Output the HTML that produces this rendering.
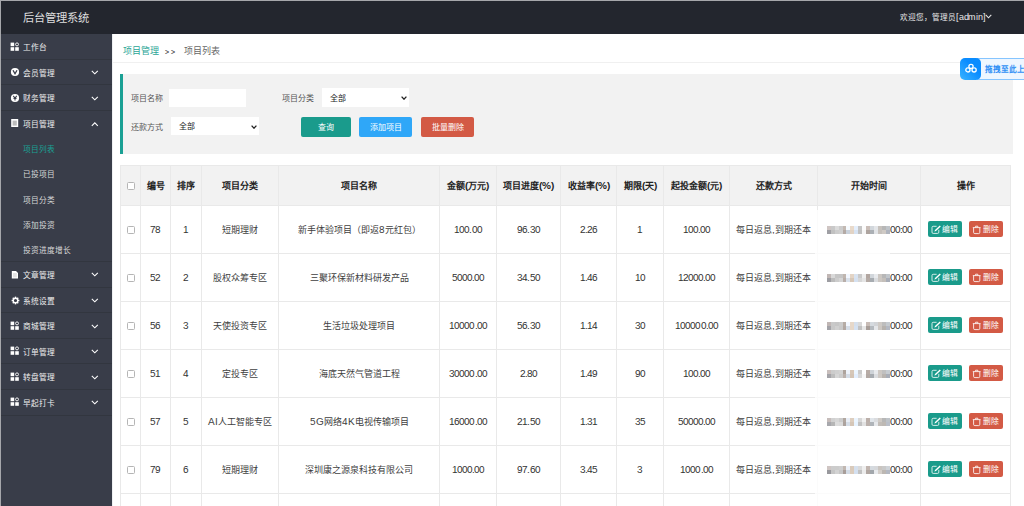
<!DOCTYPE html><html lang="zh-CN"><head><meta charset="utf-8"><style>
@font-face{font-family:"LSA";src:local("Liberation Sans"),local("LiberationSans");font-weight:400;size-adjust:111%;unicode-range:U+0020-00FF}
@font-face{font-family:"LSA";src:local("Liberation Sans Bold"),local("LiberationSans-Bold");font-weight:700;size-adjust:111%;unicode-range:U+0020-00FF}
*{box-sizing:border-box;margin:0;padding:0}
html,body{width:1024px;height:506px;overflow:hidden;background:#fff;font-family:"LSA","Liberation Sans",sans-serif;}
#frame-t{position:absolute;left:0;top:0;width:1024px;height:1px;background:#a6a7ab;z-index:50}
#frame-l{position:absolute;left:0;top:0;width:1px;height:506px;background:#a6a7ab;z-index:50}
#hdr{position:absolute;left:0;top:0;width:1024px;height:34px;background:#23262e}
#hdr .logo{position:absolute;left:23px;top:10px;font-size:11.3px;line-height:16px;color:#dedede;white-space:nowrap}
#hdr .user{position:absolute;left:900px;top:11.2px;font-size:7.6px;line-height:12px;color:#e8e8e8;white-space:nowrap}
#side{position:absolute;left:0;top:34px;width:112px;height:472px;background:#393d49}
.mi{position:absolute;left:0;top:0;width:112px}
.mi .t{position:absolute;left:23px;font-size:7.7px;line-height:11px;color:#eee;white-space:nowrap}
.ic{position:absolute;left:10px}
.ch{position:absolute;left:91px}
.si .t{position:absolute;left:23px;font-size:7.7px;line-height:11px;color:#d8d8d8;white-space:nowrap}
#crumb{position:absolute;left:112px;top:34px;width:912px;height:29px;border-bottom:1px solid #f0f0f0}
#crumb span{position:absolute;top:10.2px;font-size:9px;line-height:13px;white-space:nowrap}
#search{position:absolute;left:120px;top:74px;width:893px;height:80px;background:#f2f2f2;border-left:3px solid #1aa094}
.lbl{position:absolute;font-size:8px;line-height:11px;color:#555;white-space:nowrap}
.inp{position:absolute;background:#fff}
.sel{position:absolute;background:#fff}
.sel span{position:absolute;left:8px;top:4px;font-size:8px;line-height:11px;color:#222}
.sel svg{position:absolute;right:2px;top:7.5px}
.btn{position:absolute;height:20px;border-radius:2px;color:#fff;font-size:8px;line-height:20px;text-align:center;white-space:nowrap}
#tbl{position:absolute;left:120px;top:165px;border-collapse:collapse;table-layout:fixed;width:891px}
.n{color:#333;letter-spacing:-0.9px;position:relative;top:0px}
#tbl td,#tbl th{border:1px solid #e9e9e9;text-align:center;font-size:9px;color:#404040;white-space:nowrap;overflow:hidden;padding:0}
#tbl th{background:#f2f2f2;height:40px;font-weight:bold;color:#222}
#tbl td{height:48px}
.cb{display:inline-block;width:8px;height:8px;border:1px solid #b5b5b5;background:#fff;border-radius:1.5px;vertical-align:middle;position:relative;top:-0.8px}
.ob{display:inline-block;position:relative;height:16px;border-radius:2px;width:33.6px;vertical-align:middle;top:-0.5px}
.obt{position:absolute;left:13.8px;top:2.6px;font-size:7.8px;line-height:11px;color:#fff}
#bd{position:absolute;left:960px;top:58px;width:80px;height:22px;z-index:20}
#bd .sq{position:absolute;left:0;top:0;width:21px;height:22px;border-radius:5px;background:linear-gradient(to top right,#3ab4ff,#0a8cff 60%);z-index:2}
#bd .sq svg{position:absolute;left:3.5px;top:5.4px}
#bd .tx{position:absolute;left:17px;top:0;width:70px;height:22px;background:#eef6ff;border:1px solid #86c5ff;border-left:none;padding-left:7.5px;font-size:7.6px;line-height:20px;color:#2f8ff5;font-weight:bold;white-space:nowrap}
.mos{display:inline-block;position:relative;z-index:2;width:63px;height:7.8px;vertical-align:middle;top:-0.3px}
.mos i{position:absolute;width:3.95px;height:3.9px}
#tbl td.dt{padding-left:1px}
</style></head><body>
<div id="hdr"><div class="logo">后台管理系统</div><div class="user">欢迎您，管理员<span style="font-size:7.8px;letter-spacing:-0.25px">[admin]</span><svg width="7" height="5" viewBox="0 0 7 5" style="margin-left:-0.5px;vertical-align:1px"><path d="M0.7 0.8 L3.5 3.8 L6.3 0.8" stroke="#e8e8e8" stroke-width="1.1" fill="none"/></svg></div></div>
<div id="side">
<div style="position:absolute;left:0;top:25px;width:112px;height:1px;background:#32363f"></div>
<div style="position:absolute;left:0;top:50px;width:112px;height:1px;background:#32363f"></div>
<div style="position:absolute;left:0;top:76px;width:112px;height:1px;background:#32363f"></div>
<div style="position:absolute;left:0;top:227px;width:112px;height:1px;background:#32363f"></div>
<div style="position:absolute;left:0;top:253px;width:112px;height:1px;background:#32363f"></div>
<div style="position:absolute;left:0;top:278px;width:112px;height:1px;background:#32363f"></div>
<div style="position:absolute;left:0;top:304px;width:112px;height:1px;background:#32363f"></div>
<div style="position:absolute;left:0;top:329px;width:112px;height:1px;background:#32363f"></div>
<div style="position:absolute;left:0;top:355px;width:112px;height:1px;background:#32363f"></div>
<div style="position:absolute;left:0;top:381px;width:112px;height:1px;background:#32363f"></div>
<div class="mi"><div class="t" style="top:8.40px">工作台</div><svg class="ic" style="top:7.699999999999999px" width="10" height="10" viewBox="0 0 10 10"><rect x="0.6" y="0.6" width="3.6" height="3.6" fill="#fff"/><rect x="0.6" y="5.2" width="3.6" height="3.6" fill="#fff"/><rect x="5.2" y="5.2" width="3.6" height="3.6" fill="#fff"/><circle cx="7" cy="2.4" r="1.5" stroke="#fff" stroke-width="0.9" fill="none"/></svg></div>
<div class="mi"><div class="t" style="top:33.90px">会员管理</div><svg class="ic" style="top:33.2px" width="10" height="10" viewBox="0 0 10 10"><circle cx="5" cy="5" r="4.1" fill="#fff"/><path d="M3 3.3 L5 6.8 L7 3.3" stroke="#393d49" stroke-width="1.3" fill="none"/></svg><svg class="ch" style="top:36.2px" width="8" height="5" viewBox="0 0 8 5"><path d="M0.8 0.8 L3.8 3.8 L6.8 0.8" stroke="#fff" stroke-width="1.1" fill="none"/></svg></div>
<div class="mi"><div class="t" style="top:59.40px">财务管理</div><svg class="ic" style="top:58.7px" width="10" height="10" viewBox="0 0 10 10"><circle cx="5" cy="5" r="4.1" fill="#fff"/><path d="M3.2 2.8 L5 5 L6.8 2.8 M5 5 V7.4 M3.5 5.4 H6.5" stroke="#393d49" stroke-width="1.1" fill="none"/></svg><svg class="ch" style="top:61.7px" width="8" height="5" viewBox="0 0 8 5"><path d="M0.8 0.8 L3.8 3.8 L6.8 0.8" stroke="#fff" stroke-width="1.1" fill="none"/></svg></div>
<div class="mi"><div class="t" style="top:84.90px">项目管理</div><svg class="ic" style="top:84.2px" width="10" height="10" viewBox="0 0 10 10"><rect x="1.2" y="1" width="7" height="8" fill="#fff"/><rect x="2.6" y="2.6" width="4.2" height="5" fill="#bbb"/></svg><svg class="ch" style="top:88.2px" width="8" height="5" viewBox="0 0 8 5"><path d="M0.8 3.8 L3.8 0.8 L6.8 3.8" stroke="#fff" stroke-width="1.1" fill="none"/></svg></div>
<div class="si"><div class="t" style="top:110.40px;color:#1aa094">项目列表</div></div>
<div class="si"><div class="t" style="top:135.45px;color:#d8d8d8">已投项目</div></div>
<div class="si"><div class="t" style="top:160.50px;color:#d8d8d8">项目分类</div></div>
<div class="si"><div class="t" style="top:185.55px;color:#d8d8d8">添加投资</div></div>
<div class="si"><div class="t" style="top:210.60px;color:#d8d8d8">投资进度增长</div></div>
<div class="mi"><div class="t" style="top:235.90px">文章管理</div><svg class="ic" style="top:236.2px" width="10" height="10" viewBox="0 0 10 10"><path d="M1.8 1 H6 L8 3 V8.6 H1.8 Z" fill="#fff"/><rect x="3" y="3" width="3.8" height="4.4" fill="#e4e4e4"/></svg><svg class="ch" style="top:238.2px" width="8" height="5" viewBox="0 0 8 5"><path d="M0.8 0.8 L3.8 3.8 L6.8 0.8" stroke="#fff" stroke-width="1.1" fill="none"/></svg></div>
<div class="mi"><div class="t" style="top:261.90px">系统设置</div><svg class="ic" style="top:261.7px;left:10.5px" width="9" height="9" viewBox="0 0 10 10"><g fill="#fff"><rect x="4.2" y="0.7" width="1.6" height="2" transform="rotate(0 5 5)"/><rect x="4.2" y="0.7" width="1.6" height="2" transform="rotate(45 5 5)"/><rect x="4.2" y="0.7" width="1.6" height="2" transform="rotate(90 5 5)"/><rect x="4.2" y="0.7" width="1.6" height="2" transform="rotate(135 5 5)"/><rect x="4.2" y="0.7" width="1.6" height="2" transform="rotate(180 5 5)"/><rect x="4.2" y="0.7" width="1.6" height="2" transform="rotate(225 5 5)"/><rect x="4.2" y="0.7" width="1.6" height="2" transform="rotate(270 5 5)"/><rect x="4.2" y="0.7" width="1.6" height="2" transform="rotate(315 5 5)"/></g><circle cx="5" cy="5" r="2.55" stroke="#fff" stroke-width="1.5" fill="none"/></svg><svg class="ch" style="top:264.2px" width="8" height="5" viewBox="0 0 8 5"><path d="M0.8 0.8 L3.8 3.8 L6.8 0.8" stroke="#fff" stroke-width="1.1" fill="none"/></svg></div>
<div class="mi"><div class="t" style="top:287.40px">商城管理</div><svg class="ic" style="top:286.7px" width="10" height="10" viewBox="0 0 10 10"><rect x="0.6" y="0.6" width="3.6" height="3.6" fill="#fff"/><rect x="0.6" y="5.2" width="3.6" height="3.6" fill="#fff"/><rect x="5.2" y="5.2" width="3.6" height="3.6" fill="#fff"/><circle cx="7" cy="2.4" r="1.5" stroke="#fff" stroke-width="0.9" fill="none"/></svg><svg class="ch" style="top:289.7px" width="8" height="5" viewBox="0 0 8 5"><path d="M0.8 0.8 L3.8 3.8 L6.8 0.8" stroke="#fff" stroke-width="1.1" fill="none"/></svg></div>
<div class="mi"><div class="t" style="top:312.90px">订单管理</div><svg class="ic" style="top:312.2px" width="10" height="10" viewBox="0 0 10 10"><rect x="0.6" y="0.6" width="3.6" height="3.6" fill="#fff"/><rect x="0.6" y="5.2" width="3.6" height="3.6" fill="#fff"/><rect x="5.2" y="5.2" width="3.6" height="3.6" fill="#fff"/><circle cx="7" cy="2.4" r="1.5" stroke="#fff" stroke-width="0.9" fill="none"/></svg><svg class="ch" style="top:315.2px" width="8" height="5" viewBox="0 0 8 5"><path d="M0.8 0.8 L3.8 3.8 L6.8 0.8" stroke="#fff" stroke-width="1.1" fill="none"/></svg></div>
<div class="mi"><div class="t" style="top:338.40px">转盘管理</div><svg class="ic" style="top:337.7px" width="10" height="10" viewBox="0 0 10 10"><rect x="0.6" y="0.6" width="3.6" height="3.6" fill="#fff"/><rect x="0.6" y="5.2" width="3.6" height="3.6" fill="#fff"/><rect x="5.2" y="5.2" width="3.6" height="3.6" fill="#fff"/><circle cx="7" cy="2.4" r="1.5" stroke="#fff" stroke-width="0.9" fill="none"/></svg><svg class="ch" style="top:340.7px" width="8" height="5" viewBox="0 0 8 5"><path d="M0.8 0.8 L3.8 3.8 L6.8 0.8" stroke="#fff" stroke-width="1.1" fill="none"/></svg></div>
<div class="mi"><div class="t" style="top:363.90px">早起打卡</div><svg class="ic" style="top:363.2px" width="10" height="10" viewBox="0 0 10 10"><rect x="0.6" y="0.6" width="3.6" height="3.6" fill="#fff"/><rect x="0.6" y="5.2" width="3.6" height="3.6" fill="#fff"/><rect x="5.2" y="5.2" width="3.6" height="3.6" fill="#fff"/><circle cx="7" cy="2.4" r="1.5" stroke="#fff" stroke-width="0.9" fill="none"/></svg><svg class="ch" style="top:366.2px" width="8" height="5" viewBox="0 0 8 5"><path d="M0.8 0.8 L3.8 3.8 L6.8 0.8" stroke="#fff" stroke-width="1.1" fill="none"/></svg></div>
</div>
<div id="crumb">
  <span style="left:11px;color:#2aa596">项目管理</span>
  <span style="left:53px;top:11.2px;color:#444;font-size:6.6px;letter-spacing:1.6px;font-weight:bold">&gt;&gt;</span>
  <span style="left:72px;color:#666">项目列表</span>
</div>
<div id="search">
  <div class="lbl" style="left:8px;top:19px">项目名称</div>
  <div class="inp" style="left:46px;top:15px;width:77px;height:18px"></div>
  <div class="lbl" style="left:159px;top:19px">项目分类</div>
  <div class="sel" style="left:198.6px;top:14px;width:87.4px;height:19px"><span style="top:5px">全部</span><svg width="6" height="4" viewBox="0 0 6 4"><path d="M0.6 0.6 L3 3.2 L5.4 0.6" stroke="#222" stroke-width="1.3" fill="none"/></svg></div>
  <div class="lbl" style="left:8px;top:48px">还款方式</div>
  <div class="sel" style="left:48px;top:43px;width:88px;height:18px"><span>全部</span><svg width="6" height="4" viewBox="0 0 6 4"><path d="M0.6 0.6 L3 3.2 L5.4 0.6" stroke="#222" stroke-width="1.3" fill="none"/></svg></div>
  <div class="btn" style="left:178px;top:43px;width:50px;background:#1a9b8c">查询</div>
  <div class="btn" style="left:236px;top:43px;width:53px;background:#2fa7f8">添加项目</div>
  <div class="btn" style="left:298px;top:43px;width:53px;background:#d35a45">批量删除</div>
</div>
<table id="tbl"><colgroup><col style="width:20px"><col style="width:30px"><col style="width:31px"><col style="width:77px"><col style="width:161px"><col style="width:57px"><col style="width:64px"><col style="width:56px"><col style="width:47px"><col style="width:66px"><col style="width:88px"><col style="width:103px"><col style="width:90px"></colgroup>
<tr><th><span class="cb"></span></th><th>编号</th><th>排序</th><th>项目分类</th><th>项目名称</th><th>金额(万元)</th><th>项目进度(%)</th><th>收益率(%)</th><th>期限(天)</th><th>起投金额(元)</th><th>还款方式</th><th>开始时间</th><th>操作</th></tr>
<tr><td><span class="cb"></span></td><td><span class="n">78</span></td><td><span class="n">1</span></td><td>短期理财</td><td>新手体验项目（即返8元红包）</td><td><span class="n">100.00</span></td><td><span class="n">96.30</span></td><td><span class="n">2.26</span></td><td><span class="n">1</span></td><td><span class="n">100.00</span></td><td>每日返息,到期还本</td><td class="dt"><span class="mos"><i style="left:0.00px;top:0.00px;background:rgb(207, 197, 195)"></i><i style="left:3.95px;top:0.00px;background:rgb(201, 201, 201)"></i><i style="left:7.90px;top:0.00px;background:rgb(219, 219, 219)"></i><i style="left:11.85px;top:0.00px;background:rgb(204, 204, 204)"></i><i style="left:15.80px;top:0.00px;background:rgb(195, 185, 178)"></i><i style="left:19.75px;top:0.00px;background:rgb(246, 251, 255)"></i><i style="left:23.70px;top:0.00px;background:rgb(233, 218, 203)"></i><i style="left:27.65px;top:0.00px;background:rgb(229, 239, 252)"></i><i style="left:31.60px;top:0.00px;background:rgb(198, 198, 198)"></i><i style="left:35.55px;top:0.00px;background:rgb(252, 252, 252)"></i><i style="left:39.50px;top:0.00px;background:rgb(202, 190, 184)"></i><i style="left:43.45px;top:0.00px;background:rgb(210, 215, 220)"></i><i style="left:47.40px;top:0.00px;background:rgb(228, 230, 233)"></i><i style="left:51.35px;top:0.00px;background:rgb(199, 194, 189)"></i><i style="left:55.30px;top:0.00px;background:rgb(183, 183, 183)"></i><i style="left:59.25px;top:0.00px;background:rgb(191, 196, 201)"></i><i style="left:0.00px;top:3.90px;background:rgb(159, 159, 164)"></i><i style="left:3.95px;top:3.90px;background:rgb(193, 193, 193)"></i><i style="left:7.90px;top:3.90px;background:rgb(205, 205, 205)"></i><i style="left:11.85px;top:3.90px;background:rgb(208, 208, 208)"></i><i style="left:15.80px;top:3.90px;background:rgb(180, 170, 165)"></i><i style="left:19.75px;top:3.90px;background:rgb(201, 209, 219)"></i><i style="left:23.70px;top:3.90px;background:rgb(226, 211, 196)"></i><i style="left:27.65px;top:3.90px;background:rgb(215, 227, 243)"></i><i style="left:31.60px;top:3.90px;background:rgb(193, 193, 193)"></i><i style="left:35.55px;top:3.90px;background:rgb(246, 246, 246)"></i><i style="left:39.50px;top:3.90px;background:rgb(174, 164, 159)"></i><i style="left:43.45px;top:3.90px;background:rgb(171, 176, 181)"></i><i style="left:47.40px;top:3.90px;background:rgb(226, 228, 231)"></i><i style="left:51.35px;top:3.90px;background:rgb(198, 193, 188)"></i><i style="left:55.30px;top:3.90px;background:rgb(207, 202, 197)"></i><i style="left:59.25px;top:3.90px;background:rgb(175, 180, 190)"></i></span><span class="n" style="color:#333">00:00</span></td><td><span class="ob" style="background:#1a9b8b"><svg width="11" height="10" viewBox="0 0 11 10" style="position:absolute;left:3px;top:4px"><path d="M5.6 1.3 H2.2 Q1 1.3 1 2.5 V7.2 Q1 8.4 2.2 8.4 H6.6 Q7.8 8.4 7.8 7.2 V4.8" stroke="#fff" stroke-width="0.9" fill="none" opacity="0.9"/><path d="M3.4 6.6 L4 5 L8.8 0.6 L9.8 1.6 L5 6 Z" fill="#fff"/></svg><span class="obt">编辑</span></span><span class="ob" style="background:#d35a45;margin-left:7.5px"><svg width="10" height="10" viewBox="0 0 10 10" style="position:absolute;left:3px;top:4px"><path d="M0.8 2.6 H8.6 M3.6 2.4 V1.2 H5.8 V2.4 M1.6 2.8 V7.4 Q1.6 8.6 2.8 8.6 H6.6 Q7.8 8.6 7.8 7.4 V2.8" stroke="#fff" stroke-width="0.9" fill="none" opacity="0.92"/></svg><span class="obt">删除</span></span></td></tr>
<tr><td><span class="cb"></span></td><td><span class="n">52</span></td><td><span class="n">2</span></td><td>股权众筹专区</td><td>三聚环保新材料研发产品</td><td><span class="n">5000.00</span></td><td><span class="n">34.50</span></td><td><span class="n">1.46</span></td><td><span class="n">10</span></td><td><span class="n">12000.00</span></td><td>每日返息,到期还本</td><td class="dt"><span class="mos"><i style="left:0.00px;top:0.00px;background:rgb(193, 183, 181)"></i><i style="left:3.95px;top:0.00px;background:rgb(217, 217, 217)"></i><i style="left:7.90px;top:0.00px;background:rgb(198, 198, 198)"></i><i style="left:11.85px;top:0.00px;background:rgb(197, 197, 197)"></i><i style="left:15.80px;top:0.00px;background:rgb(192, 182, 175)"></i><i style="left:19.75px;top:0.00px;background:rgb(242, 247, 255)"></i><i style="left:23.70px;top:0.00px;background:rgb(227, 212, 197)"></i><i style="left:27.65px;top:0.00px;background:rgb(217, 227, 240)"></i><i style="left:31.60px;top:0.00px;background:rgb(202, 202, 202)"></i><i style="left:35.55px;top:0.00px;background:rgb(238, 238, 238)"></i><i style="left:39.50px;top:0.00px;background:rgb(178, 166, 160)"></i><i style="left:43.45px;top:0.00px;background:rgb(209, 214, 219)"></i><i style="left:47.40px;top:0.00px;background:rgb(232, 234, 237)"></i><i style="left:51.35px;top:0.00px;background:rgb(204, 199, 194)"></i><i style="left:55.30px;top:0.00px;background:rgb(183, 183, 183)"></i><i style="left:59.25px;top:0.00px;background:rgb(193, 198, 203)"></i><i style="left:0.00px;top:3.90px;background:rgb(157, 157, 162)"></i><i style="left:3.95px;top:3.90px;background:rgb(188, 188, 188)"></i><i style="left:7.90px;top:3.90px;background:rgb(204, 204, 204)"></i><i style="left:11.85px;top:3.90px;background:rgb(213, 213, 213)"></i><i style="left:15.80px;top:3.90px;background:rgb(184, 174, 169)"></i><i style="left:19.75px;top:3.90px;background:rgb(218, 226, 236)"></i><i style="left:23.70px;top:3.90px;background:rgb(214, 199, 184)"></i><i style="left:27.65px;top:3.90px;background:rgb(213, 225, 241)"></i><i style="left:31.60px;top:3.90px;background:rgb(215, 215, 215)"></i><i style="left:35.55px;top:3.90px;background:rgb(229, 229, 229)"></i><i style="left:39.50px;top:3.90px;background:rgb(180, 170, 165)"></i><i style="left:43.45px;top:3.90px;background:rgb(167, 172, 177)"></i><i style="left:47.40px;top:3.90px;background:rgb(218, 220, 223)"></i><i style="left:51.35px;top:3.90px;background:rgb(204, 199, 194)"></i><i style="left:55.30px;top:3.90px;background:rgb(196, 191, 186)"></i><i style="left:59.25px;top:3.90px;background:rgb(168, 173, 183)"></i></span><span class="n" style="color:#333">00:00</span></td><td><span class="ob" style="background:#1a9b8b"><svg width="11" height="10" viewBox="0 0 11 10" style="position:absolute;left:3px;top:4px"><path d="M5.6 1.3 H2.2 Q1 1.3 1 2.5 V7.2 Q1 8.4 2.2 8.4 H6.6 Q7.8 8.4 7.8 7.2 V4.8" stroke="#fff" stroke-width="0.9" fill="none" opacity="0.9"/><path d="M3.4 6.6 L4 5 L8.8 0.6 L9.8 1.6 L5 6 Z" fill="#fff"/></svg><span class="obt">编辑</span></span><span class="ob" style="background:#d35a45;margin-left:7.5px"><svg width="10" height="10" viewBox="0 0 10 10" style="position:absolute;left:3px;top:4px"><path d="M0.8 2.6 H8.6 M3.6 2.4 V1.2 H5.8 V2.4 M1.6 2.8 V7.4 Q1.6 8.6 2.8 8.6 H6.6 Q7.8 8.6 7.8 7.4 V2.8" stroke="#fff" stroke-width="0.9" fill="none" opacity="0.92"/></svg><span class="obt">删除</span></span></td></tr>
<tr><td><span class="cb"></span></td><td><span class="n">56</span></td><td><span class="n">3</span></td><td>天使投资专区</td><td>生活垃圾处理项目</td><td><span class="n">10000.00</span></td><td><span class="n">56.30</span></td><td><span class="n">1.14</span></td><td><span class="n">30</span></td><td><span class="n">100000.00</span></td><td>每日返息,到期还本</td><td class="dt"><span class="mos"><i style="left:0.00px;top:0.00px;background:rgb(192, 182, 180)"></i><i style="left:3.95px;top:0.00px;background:rgb(201, 201, 201)"></i><i style="left:7.90px;top:0.00px;background:rgb(198, 198, 198)"></i><i style="left:11.85px;top:0.00px;background:rgb(203, 203, 203)"></i><i style="left:15.80px;top:0.00px;background:rgb(182, 172, 165)"></i><i style="left:19.75px;top:0.00px;background:rgb(242, 247, 255)"></i><i style="left:23.70px;top:0.00px;background:rgb(231, 216, 201)"></i><i style="left:27.65px;top:0.00px;background:rgb(213, 223, 236)"></i><i style="left:31.60px;top:0.00px;background:rgb(217, 217, 217)"></i><i style="left:35.55px;top:0.00px;background:rgb(255, 255, 255)"></i><i style="left:39.50px;top:0.00px;background:rgb(200, 188, 182)"></i><i style="left:43.45px;top:0.00px;background:rgb(213, 218, 223)"></i><i style="left:47.40px;top:0.00px;background:rgb(210, 212, 215)"></i><i style="left:51.35px;top:0.00px;background:rgb(207, 202, 197)"></i><i style="left:55.30px;top:0.00px;background:rgb(189, 189, 189)"></i><i style="left:59.25px;top:0.00px;background:rgb(197, 202, 207)"></i><i style="left:0.00px;top:3.90px;background:rgb(163, 163, 168)"></i><i style="left:3.95px;top:3.90px;background:rgb(200, 200, 200)"></i><i style="left:7.90px;top:3.90px;background:rgb(208, 208, 208)"></i><i style="left:11.85px;top:3.90px;background:rgb(201, 201, 201)"></i><i style="left:15.80px;top:3.90px;background:rgb(178, 168, 163)"></i><i style="left:19.75px;top:3.90px;background:rgb(213, 221, 231)"></i><i style="left:23.70px;top:3.90px;background:rgb(230, 215, 200)"></i><i style="left:27.65px;top:3.90px;background:rgb(213, 225, 241)"></i><i style="left:31.60px;top:3.90px;background:rgb(194, 194, 194)"></i><i style="left:35.55px;top:3.90px;background:rgb(231, 231, 231)"></i><i style="left:39.50px;top:3.90px;background:rgb(168, 158, 153)"></i><i style="left:43.45px;top:3.90px;background:rgb(181, 186, 191)"></i><i style="left:47.40px;top:3.90px;background:rgb(229, 231, 234)"></i><i style="left:51.35px;top:3.90px;background:rgb(205, 200, 195)"></i><i style="left:55.30px;top:3.90px;background:rgb(183, 178, 173)"></i><i style="left:59.25px;top:3.90px;background:rgb(180, 185, 195)"></i></span><span class="n" style="color:#333">00:00</span></td><td><span class="ob" style="background:#1a9b8b"><svg width="11" height="10" viewBox="0 0 11 10" style="position:absolute;left:3px;top:4px"><path d="M5.6 1.3 H2.2 Q1 1.3 1 2.5 V7.2 Q1 8.4 2.2 8.4 H6.6 Q7.8 8.4 7.8 7.2 V4.8" stroke="#fff" stroke-width="0.9" fill="none" opacity="0.9"/><path d="M3.4 6.6 L4 5 L8.8 0.6 L9.8 1.6 L5 6 Z" fill="#fff"/></svg><span class="obt">编辑</span></span><span class="ob" style="background:#d35a45;margin-left:7.5px"><svg width="10" height="10" viewBox="0 0 10 10" style="position:absolute;left:3px;top:4px"><path d="M0.8 2.6 H8.6 M3.6 2.4 V1.2 H5.8 V2.4 M1.6 2.8 V7.4 Q1.6 8.6 2.8 8.6 H6.6 Q7.8 8.6 7.8 7.4 V2.8" stroke="#fff" stroke-width="0.9" fill="none" opacity="0.92"/></svg><span class="obt">删除</span></span></td></tr>
<tr><td><span class="cb"></span></td><td><span class="n">51</span></td><td><span class="n">4</span></td><td>定投专区</td><td>海底天然气管道工程</td><td><span class="n">30000.00</span></td><td><span class="n">2.80</span></td><td><span class="n">1.49</span></td><td><span class="n">90</span></td><td><span class="n">100.00</span></td><td>每日返息,到期还本</td><td class="dt"><span class="mos"><i style="left:0.00px;top:0.00px;background:rgb(201, 191, 189)"></i><i style="left:3.95px;top:0.00px;background:rgb(204, 204, 204)"></i><i style="left:7.90px;top:0.00px;background:rgb(208, 208, 208)"></i><i style="left:11.85px;top:0.00px;background:rgb(211, 211, 211)"></i><i style="left:15.80px;top:0.00px;background:rgb(173, 163, 156)"></i><i style="left:19.75px;top:0.00px;background:rgb(237, 242, 250)"></i><i style="left:23.70px;top:0.00px;background:rgb(214, 199, 184)"></i><i style="left:27.65px;top:0.00px;background:rgb(235, 245, 255)"></i><i style="left:31.60px;top:0.00px;background:rgb(203, 203, 203)"></i><i style="left:35.55px;top:0.00px;background:rgb(255, 255, 255)"></i><i style="left:39.50px;top:0.00px;background:rgb(184, 172, 166)"></i><i style="left:43.45px;top:0.00px;background:rgb(206, 211, 216)"></i><i style="left:47.40px;top:0.00px;background:rgb(232, 234, 237)"></i><i style="left:51.35px;top:0.00px;background:rgb(205, 200, 195)"></i><i style="left:55.30px;top:0.00px;background:rgb(192, 192, 192)"></i><i style="left:59.25px;top:0.00px;background:rgb(199, 204, 209)"></i><i style="left:0.00px;top:3.90px;background:rgb(164, 164, 169)"></i><i style="left:3.95px;top:3.90px;background:rgb(189, 189, 189)"></i><i style="left:7.90px;top:3.90px;background:rgb(214, 214, 214)"></i><i style="left:11.85px;top:3.90px;background:rgb(204, 204, 204)"></i><i style="left:15.80px;top:3.90px;background:rgb(187, 177, 172)"></i><i style="left:19.75px;top:3.90px;background:rgb(212, 220, 230)"></i><i style="left:23.70px;top:3.90px;background:rgb(211, 196, 181)"></i><i style="left:27.65px;top:3.90px;background:rgb(226, 238, 254)"></i><i style="left:31.60px;top:3.90px;background:rgb(216, 216, 216)"></i><i style="left:35.55px;top:3.90px;background:rgb(247, 247, 247)"></i><i style="left:39.50px;top:3.90px;background:rgb(179, 169, 164)"></i><i style="left:43.45px;top:3.90px;background:rgb(167, 172, 177)"></i><i style="left:47.40px;top:3.90px;background:rgb(219, 221, 224)"></i><i style="left:51.35px;top:3.90px;background:rgb(206, 201, 196)"></i><i style="left:55.30px;top:3.90px;background:rgb(185, 180, 175)"></i><i style="left:59.25px;top:3.90px;background:rgb(169, 174, 184)"></i></span><span class="n" style="color:#333">00:00</span></td><td><span class="ob" style="background:#1a9b8b"><svg width="11" height="10" viewBox="0 0 11 10" style="position:absolute;left:3px;top:4px"><path d="M5.6 1.3 H2.2 Q1 1.3 1 2.5 V7.2 Q1 8.4 2.2 8.4 H6.6 Q7.8 8.4 7.8 7.2 V4.8" stroke="#fff" stroke-width="0.9" fill="none" opacity="0.9"/><path d="M3.4 6.6 L4 5 L8.8 0.6 L9.8 1.6 L5 6 Z" fill="#fff"/></svg><span class="obt">编辑</span></span><span class="ob" style="background:#d35a45;margin-left:7.5px"><svg width="10" height="10" viewBox="0 0 10 10" style="position:absolute;left:3px;top:4px"><path d="M0.8 2.6 H8.6 M3.6 2.4 V1.2 H5.8 V2.4 M1.6 2.8 V7.4 Q1.6 8.6 2.8 8.6 H6.6 Q7.8 8.6 7.8 7.4 V2.8" stroke="#fff" stroke-width="0.9" fill="none" opacity="0.92"/></svg><span class="obt">删除</span></span></td></tr>
<tr><td><span class="cb"></span></td><td><span class="n">57</span></td><td><span class="n">5</span></td><td>AI人工智能专区</td><td>5G网络4K电视传输项目</td><td><span class="n">16000.00</span></td><td><span class="n">21.50</span></td><td><span class="n">1.31</span></td><td><span class="n">35</span></td><td><span class="n">50000.00</span></td><td>每日返息,到期还本</td><td class="dt"><span class="mos"><i style="left:0.00px;top:0.00px;background:rgb(198, 188, 186)"></i><i style="left:3.95px;top:0.00px;background:rgb(209, 209, 209)"></i><i style="left:7.90px;top:0.00px;background:rgb(215, 215, 215)"></i><i style="left:11.85px;top:0.00px;background:rgb(204, 204, 204)"></i><i style="left:15.80px;top:0.00px;background:rgb(177, 167, 160)"></i><i style="left:19.75px;top:0.00px;background:rgb(233, 238, 246)"></i><i style="left:23.70px;top:0.00px;background:rgb(221, 206, 191)"></i><i style="left:27.65px;top:0.00px;background:rgb(235, 245, 255)"></i><i style="left:31.60px;top:0.00px;background:rgb(215, 215, 215)"></i><i style="left:35.55px;top:0.00px;background:rgb(240, 240, 240)"></i><i style="left:39.50px;top:0.00px;background:rgb(187, 175, 169)"></i><i style="left:43.45px;top:0.00px;background:rgb(224, 229, 234)"></i><i style="left:47.40px;top:0.00px;background:rgb(218, 220, 223)"></i><i style="left:51.35px;top:0.00px;background:rgb(207, 202, 197)"></i><i style="left:55.30px;top:0.00px;background:rgb(183, 183, 183)"></i><i style="left:59.25px;top:0.00px;background:rgb(190, 195, 200)"></i><i style="left:0.00px;top:3.90px;background:rgb(168, 168, 173)"></i><i style="left:3.95px;top:3.90px;background:rgb(182, 182, 182)"></i><i style="left:7.90px;top:3.90px;background:rgb(221, 221, 221)"></i><i style="left:11.85px;top:3.90px;background:rgb(218, 218, 218)"></i><i style="left:15.80px;top:3.90px;background:rgb(172, 162, 157)"></i><i style="left:19.75px;top:3.90px;background:rgb(213, 221, 231)"></i><i style="left:23.70px;top:3.90px;background:rgb(213, 198, 183)"></i><i style="left:27.65px;top:3.90px;background:rgb(231, 243, 255)"></i><i style="left:31.60px;top:3.90px;background:rgb(194, 194, 194)"></i><i style="left:35.55px;top:3.90px;background:rgb(225, 225, 225)"></i><i style="left:39.50px;top:3.90px;background:rgb(187, 177, 172)"></i><i style="left:43.45px;top:3.90px;background:rgb(175, 180, 185)"></i><i style="left:47.40px;top:3.90px;background:rgb(230, 232, 235)"></i><i style="left:51.35px;top:3.90px;background:rgb(194, 189, 184)"></i><i style="left:55.30px;top:3.90px;background:rgb(190, 185, 180)"></i><i style="left:59.25px;top:3.90px;background:rgb(186, 191, 201)"></i></span><span class="n" style="color:#333">00:00</span></td><td><span class="ob" style="background:#1a9b8b"><svg width="11" height="10" viewBox="0 0 11 10" style="position:absolute;left:3px;top:4px"><path d="M5.6 1.3 H2.2 Q1 1.3 1 2.5 V7.2 Q1 8.4 2.2 8.4 H6.6 Q7.8 8.4 7.8 7.2 V4.8" stroke="#fff" stroke-width="0.9" fill="none" opacity="0.9"/><path d="M3.4 6.6 L4 5 L8.8 0.6 L9.8 1.6 L5 6 Z" fill="#fff"/></svg><span class="obt">编辑</span></span><span class="ob" style="background:#d35a45;margin-left:7.5px"><svg width="10" height="10" viewBox="0 0 10 10" style="position:absolute;left:3px;top:4px"><path d="M0.8 2.6 H8.6 M3.6 2.4 V1.2 H5.8 V2.4 M1.6 2.8 V7.4 Q1.6 8.6 2.8 8.6 H6.6 Q7.8 8.6 7.8 7.4 V2.8" stroke="#fff" stroke-width="0.9" fill="none" opacity="0.92"/></svg><span class="obt">删除</span></span></td></tr>
<tr><td><span class="cb"></span></td><td><span class="n">79</span></td><td><span class="n">6</span></td><td>短期理财</td><td>深圳康之源泉科技有限公司</td><td><span class="n">1000.00</span></td><td><span class="n">97.60</span></td><td><span class="n">3.45</span></td><td><span class="n">3</span></td><td><span class="n">1000.00</span></td><td>每日返息,到期还本</td><td class="dt"><span class="mos"><i style="left:0.00px;top:0.00px;background:rgb(207, 197, 195)"></i><i style="left:3.95px;top:0.00px;background:rgb(204, 204, 204)"></i><i style="left:7.90px;top:0.00px;background:rgb(204, 204, 204)"></i><i style="left:11.85px;top:0.00px;background:rgb(207, 207, 207)"></i><i style="left:15.80px;top:0.00px;background:rgb(193, 183, 176)"></i><i style="left:19.75px;top:0.00px;background:rgb(236, 241, 249)"></i><i style="left:23.70px;top:0.00px;background:rgb(217, 202, 187)"></i><i style="left:27.65px;top:0.00px;background:rgb(214, 224, 237)"></i><i style="left:31.60px;top:0.00px;background:rgb(218, 218, 218)"></i><i style="left:35.55px;top:0.00px;background:rgb(239, 239, 239)"></i><i style="left:39.50px;top:0.00px;background:rgb(193, 181, 175)"></i><i style="left:43.45px;top:0.00px;background:rgb(213, 218, 223)"></i><i style="left:47.40px;top:0.00px;background:rgb(214, 216, 219)"></i><i style="left:51.35px;top:0.00px;background:rgb(202, 197, 192)"></i><i style="left:55.30px;top:0.00px;background:rgb(201, 201, 201)"></i><i style="left:59.25px;top:0.00px;background:rgb(206, 211, 216)"></i><i style="left:0.00px;top:3.90px;background:rgb(152, 152, 157)"></i><i style="left:3.95px;top:3.90px;background:rgb(198, 198, 198)"></i><i style="left:7.90px;top:3.90px;background:rgb(211, 211, 211)"></i><i style="left:11.85px;top:3.90px;background:rgb(199, 199, 199)"></i><i style="left:15.80px;top:3.90px;background:rgb(168, 158, 153)"></i><i style="left:19.75px;top:3.90px;background:rgb(211, 219, 229)"></i><i style="left:23.70px;top:3.90px;background:rgb(219, 204, 189)"></i><i style="left:27.65px;top:3.90px;background:rgb(212, 224, 240)"></i><i style="left:31.60px;top:3.90px;background:rgb(194, 194, 194)"></i><i style="left:35.55px;top:3.90px;background:rgb(236, 236, 236)"></i><i style="left:39.50px;top:3.90px;background:rgb(177, 167, 162)"></i><i style="left:43.45px;top:3.90px;background:rgb(162, 167, 172)"></i><i style="left:47.40px;top:3.90px;background:rgb(232, 234, 237)"></i><i style="left:51.35px;top:3.90px;background:rgb(212, 207, 202)"></i><i style="left:55.30px;top:3.90px;background:rgb(188, 183, 178)"></i><i style="left:59.25px;top:3.90px;background:rgb(179, 184, 194)"></i></span><span class="n" style="color:#333">00:00</span></td><td><span class="ob" style="background:#1a9b8b"><svg width="11" height="10" viewBox="0 0 11 10" style="position:absolute;left:3px;top:4px"><path d="M5.6 1.3 H2.2 Q1 1.3 1 2.5 V7.2 Q1 8.4 2.2 8.4 H6.6 Q7.8 8.4 7.8 7.2 V4.8" stroke="#fff" stroke-width="0.9" fill="none" opacity="0.9"/><path d="M3.4 6.6 L4 5 L8.8 0.6 L9.8 1.6 L5 6 Z" fill="#fff"/></svg><span class="obt">编辑</span></span><span class="ob" style="background:#d35a45;margin-left:7.5px"><svg width="10" height="10" viewBox="0 0 10 10" style="position:absolute;left:3px;top:4px"><path d="M0.8 2.6 H8.6 M3.6 2.4 V1.2 H5.8 V2.4 M1.6 2.8 V7.4 Q1.6 8.6 2.8 8.6 H6.6 Q7.8 8.6 7.8 7.4 V2.8" stroke="#fff" stroke-width="0.9" fill="none" opacity="0.92"/></svg><span class="obt">删除</span></span></td></tr>
<tr><td></td><td></td><td></td><td></td><td></td><td></td><td></td><td></td><td></td><td></td><td></td><td></td><td></td></tr>
</table>
<div style="position:absolute;left:815px;top:210px;width:75px;height:296px;background:rgba(255,255,255,0.8)"></div>
<div id="bd"><div class="sq"><svg width="14" height="11" viewBox="0 0 14 11"><g stroke="#fff" stroke-width="1.3" fill="none"><circle cx="7" cy="3.4" r="2.1"/><circle cx="3.9" cy="6.9" r="2.1"/><circle cx="10.1" cy="6.9" r="2.1"/></g></svg></div><div class="tx">拖拽至此上传</div></div>
<div style="position:absolute;left:112px;top:34px;width:1px;height:472px;background:#eef0f2"></div>
<div id="frame-t"></div><div id="frame-l"></div>
</body></html>
